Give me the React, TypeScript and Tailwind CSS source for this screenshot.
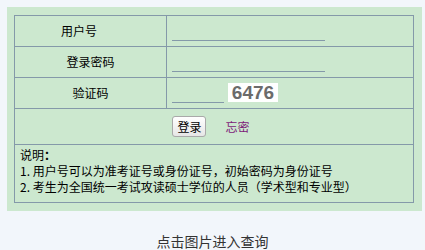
const cjk = { fontFamily: '"Noto Sans CJK SC", "Liberation Sans", sans-serif' };

export default function App() {
  return (
    <div className="h-[250px] w-[425px] bg-[#f2f6fb] pt-[7px] text-[12px] text-black" style={cjk}>
      {/* 绿色面板 */}
      <div className="ml-[7px] w-[415px] bg-[#cce8cf] pb-[8px] pl-[7px] pr-[8px] pt-[8px]">
        <div className="border border-[#8499a9]">
          <div className="flex h-[31px] border-b border-[#8499a9]">
            <div className="flex w-[152px] items-center justify-center border-r border-[#8499a9] pr-[40px]">
              <span className="pl-[17px]">用户号</span>
            </div>
            <div className="flex flex-1 items-end pb-[5px] pl-[5px]">
              <div className="h-[18px] w-[153px] border-b border-[#8499a9]" />
            </div>
          </div>
          <div className="flex h-[31px] border-b border-[#8499a9]">
            <div className="flex w-[152px] items-center justify-center border-r border-[#8499a9]">
              登录密码
            </div>
            <div className="flex flex-1 items-end pb-[5px] pl-[5px]">
              <div className="h-[18px] w-[153px] border-b border-[#8499a9]" />
            </div>
          </div>
          <div className="flex h-[31px] border-b border-[#8499a9]">
            <div className="flex w-[152px] items-center justify-center border-r border-[#8499a9]">
              验证码
            </div>
            <div className="flex flex-1 items-end pb-[5px] pl-[5px]">
              <div className="h-[18px] w-[52px] border-b border-[#8499a9]" />
              <div
                className="mb-[1px] ml-[4px] flex h-[19px] w-[50px] items-center justify-center bg-white text-[19px] font-bold leading-none text-[#6b6b6b]"
                style={{ fontFamily: '"Liberation Sans", Arial, sans-serif' }}
              >
                6476
              </div>
            </div>
          </div>
          <div className="flex h-[36px] items-center justify-center gap-[19px] border-b border-[#8499a9] pr-[6px]">
            <button className="h-[21px] w-[34px] rounded-[3px] border border-[#a9a9a9] bg-gradient-to-b from-white to-[#e6e6e6] text-[12px] leading-none">
              登录
            </button>
            <a className="text-[#7d1a78]">忘密</a>
          </div>
          <div className="h-[57px] pl-[5px] pt-[2px] leading-[16px]">
            <div>说明<span className="font-bold">：</span></div>
            <div>1. 用户号可以为准考证号或身份证号，初始密码为身份证号</div>
            <div>2. 考生为全国统一考试攻读硕士学位的人员（学术型和专业型）</div>
          </div>
        </div>
      </div>
      <div className="mt-[22px] text-center text-[14px] leading-[16px] text-[#333]">点击图片进入查询</div>
    </div>
  );
}
